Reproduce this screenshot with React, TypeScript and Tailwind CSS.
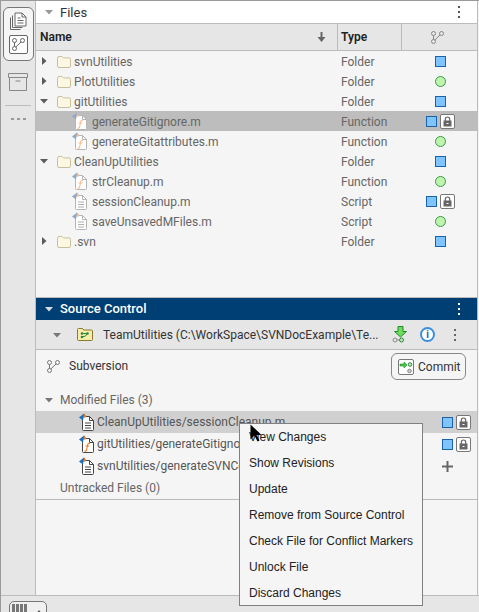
import React from "react";

const ui = "font-['Roboto','Liberation_Sans',sans-serif]";

function Caret({ open, fill = "#5c5c5c" }: { open?: boolean; fill?: string }) {
  return (
    <svg width="10" height="10" viewBox="0 0 10 10" className="shrink-0">
      {open ? <path d="M1 3h8L5 7.5z" fill={fill} /> : <path d="M3 1v8l4.5-4z" fill={fill} />}
    </svg>
  );
}

function Folder() {
  return (
    <svg width="14" height="12" viewBox="0 0 14 12" className="shrink-0">
      <path d="M.5 2.2Q.5.5 2 .5h3l1.3 1.4h5.8q1.4 0 1.4 1.4v6.9q0 1.3-1.4 1.3H2q-1.5 0-1.5-1.3z" fill="#fbf7e3" stroke="#c9bf9f" />
    </svg>
  );
}

function FileIcon({ kind, dark }: { kind: "f" | "s"; dark?: boolean }) {
  const line = dark ? "#444" : "#b4b4b4";
  const mark = dark ? "#1d6fc0" : "#8fa9c8";
  const orange = dark ? "#ee7a22" : "#f5bd91";
  return (
    <svg width="16" height="18" viewBox="0 0 16 18" className="shrink-0">
      <path d="M3.5 3.5h7l4 4v9q0 1-1 1h-9q-1 0-1-1z" fill="#fff" stroke={line} />
      <path d="M10.5 3.5v4h4" fill="none" stroke={line} />
      {kind === "f" ? (
        <path d="M11 8.5q-2-.8-2.400 1.500l-1 5q-.4 1.600-2 1M6.500 11h3.800" fill="none" stroke={orange} strokeWidth="1.100" />
      ) : (
        <path d="M6 10h6M6 12.500h6M6 15h6" stroke={dark ? "#444" : "#b0b0b0"} />
      )}
      <path d="M0 4.500 5 .5l2.500 3.500-3 .5-.5 3z" fill={mark} />
      <path d="M5 .5l2.500 3.500-3 .5z" fill={orange} />
    </svg>
  );
}

function GitIcon({ color = "#777" }: { color?: string }) {
  return (
    <svg width="13" height="13" viewBox="0 0 13 13" className="shrink-0" fill="none" stroke={color}>
      <circle cx="2.500" cy="2.500" r="2" />
      <circle cx="10.500" cy="2.500" r="2" />
      <circle cx="2.500" cy="10.500" r="2" />
      <path d="M2.500 4.500v4M9 4 3.800 9" />
    </svg>
  );
}

function Square() {
  return <div className="w-[11px] h-[11px] shrink-0 bg-[#80c4ff] border border-[#1763ad]" />;
}

function Circle() {
  return <div className="w-[11px] h-[11px] shrink-0 rounded-full bg-[#bdf5ae] border border-[#3a9a46]" />;
}

function Lock() {
  return (
    <div className="w-[15px] h-[15px] shrink-0 flex items-center justify-center rounded-[2px] bg-white border border-[#777]">
      <svg width="9" height="11" viewBox="0 0 9 11">
        <path d="M2.300 5V3.200a2.200 2.200 0 0 1 4.400 0V5" fill="none" stroke="#666" strokeWidth="1.200" />
        <path d="M.5 4.500h8v6h-8z" fill="#666" />
        <path d="M3.500 7h2v1h-2z" fill="#fff" />
      </svg>
    </div>
  );
}

function Dots({ color = "#555" }: { color?: string }) {
  return (
    <svg width="4" height="12" viewBox="0 0 4 12" className="shrink-0">
      <path d="M1 0h2v2H1zM1 5h2v2H1zM1 10h2v2H1z" fill={color} />
    </svg>
  );
}

type TreeRow = {
  name: string;
  type: string;
  status: "square" | "circle" | "locked";
  folder?: "open" | "closed";
  file?: "f" | "s";
  selected?: boolean;
};

const tree: TreeRow[] = [
  { name: "svnUtilities", type: "Folder", status: "square", folder: "closed" },
  { name: "PlotUtilities", type: "Folder", status: "circle", folder: "closed" },
  { name: "gitUtilities", type: "Folder", status: "square", folder: "open" },
  { name: "generateGitignore.m", type: "Function", status: "locked", file: "f", selected: true },
  { name: "generateGitattributes.m", type: "Function", status: "circle", file: "f" },
  { name: "CleanUpUtilities", type: "Folder", status: "square", folder: "open" },
  { name: "strCleanup.m", type: "Function", status: "circle", file: "f" },
  { name: "sessionCleanup.m", type: "Script", status: "locked", file: "s" },
  { name: "saveUnsavedMFiles.m", type: "Script", status: "circle", file: "s" },
  { name: ".svn", type: "Folder", status: "square", folder: "closed" },
];

const menuItems = [
  "View Changes",
  "Show Revisions",
  "Update",
  "Remove from Source Control",
  "Check File for Conflict Markers",
  "Unlock File",
  "Discard Changes",
];

function Row({ row }: { row: TreeRow }) {
  return (
    <div className={`h-5 flex items-center text-[12px] text-[#666] ${row.selected ? "bg-[#bdbdbd]" : ""}`}>
      <div className="w-[302px] flex items-center">
        {row.folder ? (
          <>
            <div className="w-[21px] pl-[3px] flex">
              <Caret open={row.folder === "open"} />
            </div>
            <div className="mt-px flex">
              <Folder />
            </div>
            <span className="ml-[3px] mt-px">{row.name}</span>
          </>
        ) : (
          <>
            <div className="w-[36px]" />
            <FileIcon kind={row.file ?? "s"} />
            <span className="ml-[4px] mt-px">{row.name}</span>
          </>
        )}
      </div>
      <div className="w-[64px] pl-[3px] mt-px">{row.type}</div>
      <div className="flex-1 flex items-center justify-center gap-[3px] pl-[2px]">
        {row.status === "square" && <Square />}
        {row.status === "circle" && <Circle />}
        {row.status === "locked" && (
          <>
            <Square />
            <Lock />
          </>
        )}
      </div>
    </div>
  );
}

function SourceRow({ name, kind, active, status }: { name: string; kind: "f" | "s"; active?: boolean; status: "locked" | "plus" }) {
  return (
    <div className={`h-[22px] flex items-center text-[12px] text-[#555] ${active ? "bg-[#d0d0d0]" : ""}`}>
      <div className="w-[43px]" />
      <FileIcon kind={kind} dark />
      <span className="ml-[2px] flex-1 whitespace-nowrap overflow-hidden">{name}</span>
      <div className="w-[36px] pl-px flex items-center gap-[3px]">
        {status === "locked" ? (
          <>
            <Square />
            <Lock />
          </>
        ) : (
          <svg width="11" height="11" viewBox="0 0 11 11">
            <path d="M4.500 0h2v4.500H11v2H6.500V11h-2V6.500H0v-2h4.500z" fill="#666" />
          </svg>
        )}
      </div>
    </div>
  );
}

export default function App() {
  return (
    <div className={`relative w-[479px] h-[612px] overflow-hidden flex flex-col bg-[#e6e6e6] border-t border-l border-[#9a9a9a] ${ui}`}>
      <div className="flex-1 min-h-0 flex bg-[#f5f5f5]">
        <div className="w-[35px] shrink-0 bg-[#e6e6e6] border-r border-[#bbbbbb] flex flex-col items-center pt-[6px]">
          <div className="w-[31px] h-[54px] rounded-[6px] border border-[#777] bg-[#f5f5f5] flex flex-col items-center pt-[4px] gap-[3px]">
            <svg width="20" height="20" viewBox="0 0 20 20" fill="#fff" stroke="#666">
              <path d="M2.500 5.500v12h10" fill="none" />
              <path d="M4.500 3.500v12h10" fill="none" />
              <path d="M7 1h7l4 4v9H7z" />
              <path d="M14 1v4h4M9.500 6h3M9.500 8.500h6M9.500 11h6" fill="none" />
            </svg>
            <div className="w-[19px] h-[19px] rounded-[2px] border border-[#666] bg-white flex items-center justify-center">
              <GitIcon color="#666" />
            </div>
          </div>
          <svg width="20" height="18" viewBox="0 0 20 18" className="mt-[12px]" fill="none" stroke="#888">
            <path d="M.5.500h19v4H.5zM1.500 4.500v13h17v-13M7.500 8h5" />
          </svg>
          <div className="w-[26px] h-px bg-[#bbbbbb] mt-[14px]" />
          <div className="flex gap-[3px] mt-[12px]">
            <div className="w-[3px] h-[2px] bg-[#999]" />
            <div className="w-[3px] h-[2px] bg-[#999]" />
            <div className="w-[3px] h-[2px] bg-[#999]" />
          </div>
        </div>

        <div className="flex-1 min-w-0 flex flex-col bg-[#f5f5f5] border-r border-[#bbbbbb] mr-px">
          <div className="h-[23px] shrink-0 bg-white border-b border-[#bbbbbb] flex items-center pl-[8px] pr-[16px]">
            <Caret open fill="#999" />
            <span className="ml-[6px] mt-[2px] text-[13px] text-[#333]">Files</span>
            <div className="ml-auto">
              <Dots />
            </div>
          </div>
          <div className="h-[27px] shrink-0 bg-[#e6e6e6] border-b border-[#bbbbbb] flex items-center text-[12px] font-semibold text-[#222]">
            <div className="w-[302px] h-full border-r border-[#bbbbbb] flex items-center pl-[4px] pr-[11px] justify-between">
              <span>Name</span>
              <svg width="9" height="10" viewBox="0 0 9 10">
                <path d="M3.500 0h2v5h3L4.500 10 .5 5h3z" fill="#666" />
              </svg>
            </div>
            <div className="w-[64px] h-full border-r border-[#bbbbbb] flex items-center pl-[3px]">Type</div>
            <div className="flex-1 flex justify-center pr-[4px]">
              <GitIcon color="#888" />
            </div>
          </div>
          <div className="h-[246px] shrink-0">
            {tree.map((row) => (
              <Row key={row.name} row={row} />
            ))}
          </div>
          <div className="h-[23px] shrink-0 bg-[#003f73] border-t border-[#bbbbbb] flex items-center pl-[8px] pr-[16px]">
            <Caret open fill="#d5dde6" />
            <span className="ml-[6px] text-[13px] font-medium text-white">Source Control</span>
            <div className="ml-auto">
              <Dots color="#fff" />
            </div>
          </div>
          <div className="h-[30px] shrink-0 bg-[#e6e6e6] border-b border-[#bbbbbb] flex items-center text-[12px] text-[#333] pl-[16px]">
            <Caret open fill="#777" />
            <svg width="16" height="13" viewBox="0 0 16 13" className="ml-[15px] shrink-0">
              <path d="M.5 1.500q0-1 1-1h4l1 1.500h8q1 0 1 1v8.500q0 1-1 1h-13q-1 0-1-1z" fill="#f7ecaa" stroke="#8a7a30" />
              <path d="M5 5.500h5M5 8.500h2q2 0 3-3" fill="none" stroke="#2a8a3a" />
              <circle cx="5" cy="5.500" r="1.300" fill="#2a8a3a" />
              <circle cx="5" cy="9" r="1.300" fill="#2a8a3a" />
              <circle cx="10.500" cy="5.500" r="1.300" fill="#2a8a3a" />
            </svg>
            <span className="ml-[10px] w-[276px] whitespace-nowrap">TeamUtilities (C:\WorkSpace\SVNDocExample\Te...</span>
            <svg width="16" height="17" viewBox="0 0 16 17" className="ml-[13px] shrink-0">
              <path d="M6 .5h5v5h3.500L8.500 11 2.500 5.500H6z" fill="#6fdc5f" stroke="#1f8a2a" />
              <circle cx="3" cy="14" r="2" fill="none" stroke="#888" />
              <circle cx="9.500" cy="14" r="2" fill="#bfe8bf" stroke="#2a8a3a" />
              <path d="M5 14h2.500" stroke="#888" />
            </svg>
            <div className="ml-[12px] w-[15px] h-[15px] rounded-full bg-white border-2 border-[#3c8fdc] flex items-center justify-center text-[#1763ad] text-[10px] font-bold leading-none">i</div>
            <div className="ml-[18px]">
              <Dots color="#666" />
            </div>
          </div>
          <div className="h-[39px] shrink-0 flex items-start">
            <div className="pl-[11px] pt-[7px] flex items-center">
              <GitIcon color="#777" />
              <span className="ml-[9px] text-[12px] text-[#333]">Subversion</span>
            </div>
            <div className="ml-auto mr-[11px] mt-[3px] w-[75px] h-[27px] rounded-[6px] border border-[#888] bg-[#f5f5f5] flex items-center pl-[6px] gap-[4px]">
              <svg width="16" height="16" viewBox="0 0 16 16" className="shrink-0">
                <rect x=".5" y=".5" width="15" height="15" rx="1.500" fill="#fff" stroke="#777" />
                <path d="M2 5h4V3l3 3-3 3V7H2z" fill="#46c846" stroke="#1f8a2a" strokeWidth=".6" />
                <circle cx="12" cy="5.500" r="1.800" fill="#bfe8bf" stroke="#2a8a3a" />
                <circle cx="11.500" cy="12" r="1.800" fill="#ccc" stroke="#888" />
              </svg>
              <span className="text-[12px] text-[#333]">Commit</span>
            </div>
          </div>
          <div className="h-[22px] shrink-0 flex items-center pl-[8px] text-[12px] text-[#666]">
            <Caret open fill="#777" />
            <span className="ml-[6px]">Modified Files (3)</span>
          </div>
          <SourceRow name="CleanUpUtilities/sessionCleanup.m" kind="s" active status="locked" />
          <SourceRow name="gitUtilities/generateGitignore.m" kind="f" status="locked" />
          <SourceRow name="svnUtilities/generateSVNConfig.m" kind="s" status="plus" />
          <div className="h-[23px] shrink-0 border-b border-[#bbbbbb] flex items-center pl-[24px] text-[12px] text-[#666]">Untracked Files (0)</div>
          <div className="flex-1" />
        </div>
      </div>

      <div className="h-[17px] shrink-0 border-t border-[#bbbbbb] pl-[8px] pt-[5px]">
        <div className="w-[38px] h-[20px] rounded-t-[5px] border border-[#777] bg-[#f0f0f0] flex items-start pl-[2px] pt-[2px]">
          <div className="flex gap-px">
            <div className="w-[3px] h-[12px] bg-[#777]" />
            <div className="w-[3px] h-[12px] bg-[#777]" />
            <div className="w-[3px] h-[12px] bg-[#777]" />
            <div className="w-[3px] h-[12px] bg-[#777]" />
          </div>
          <svg width="6" height="4" viewBox="0 0 6 4" className="ml-[9px] mt-[6px]">
            <path d="M0 4 3 0l3 4z" fill="#555" />
          </svg>
        </div>
      </div>

      <div className="absolute left-[238px] top-[422px] w-[184px] h-[183px] bg-[#f5f5f5] border border-[#808080] font-['Liberation_Sans',Arial,sans-serif]">
        {menuItems.map((item) => (
          <div key={item} className="h-[26px] flex items-center pl-[9px] text-[12px] text-[#222]">
            {item}
          </div>
        ))}
      </div>

      <svg width="12" height="18" viewBox="0 0 12 18" className="absolute left-[249px] top-[423px]">
        <path d="M.5.500v15l4-4 3 6 2-1-3-5.500h5z" fill="#000" />
      </svg>
    </div>
  );
}
